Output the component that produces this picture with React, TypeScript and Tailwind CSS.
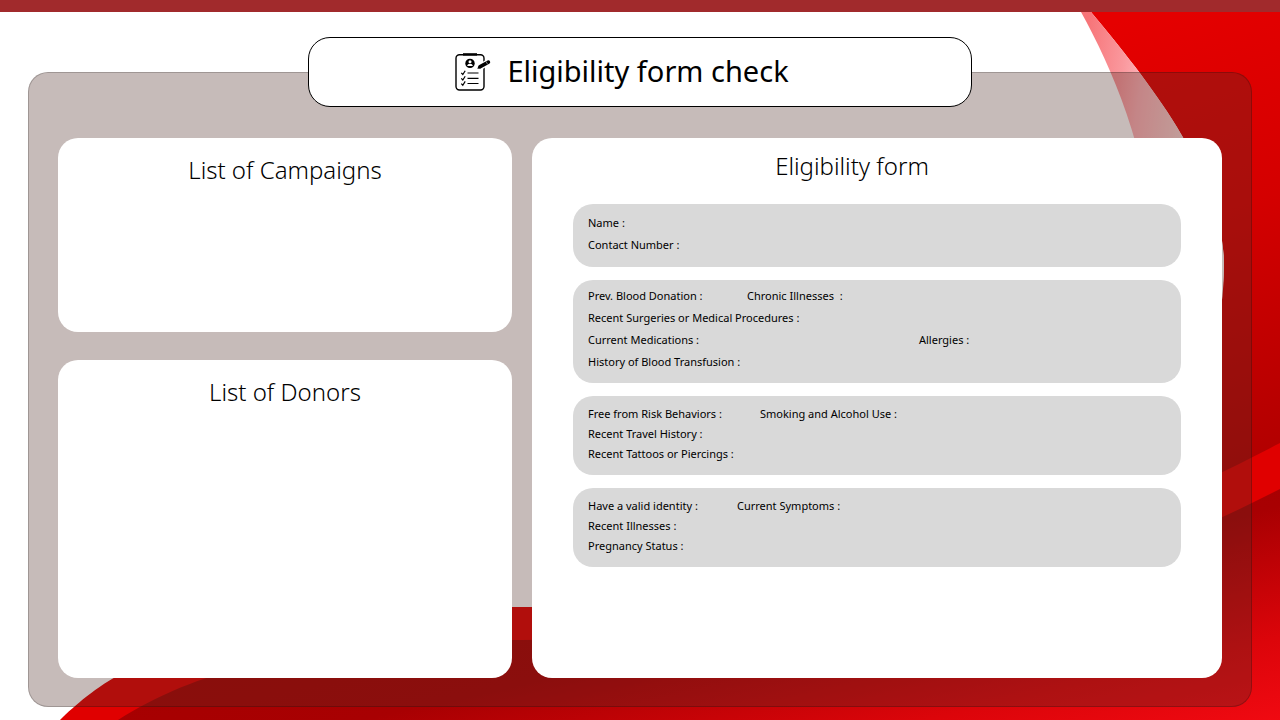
type Field = { id: string; label: string; width?: string };
type Group = { id: string; className: string; rows: Field[][] };

const groups: Group[] = [
  {
    id: "contact",
    className: "pt-2 pb-[11px] leading-[22px]",
    rows: [
      [{ id: "name", label: "Name :" }],
      [{ id: "contact-number", label: "Contact Number :" }],
    ],
  },
  {
    id: "medical",
    className: "pt-[5px] pb-[10px] leading-[22px]",
    rows: [
      [
        { id: "donation", label: "Prev. Blood Donation :", width: "w-[159px]" },
        { id: "chronic", label: "Chronic Illnesses  :" },
      ],
      [{ id: "surgeries", label: "Recent Surgeries or Medical Procedures :" }],
      [
        { id: "medications", label: "Current Medications :", width: "w-[331px]" },
        { id: "allergies", label: "Allergies :" },
      ],
      [{ id: "transfusion", label: "History of Blood Transfusion :" }],
    ],
  },
  {
    id: "lifestyle",
    className: "pt-2 pb-[11px] leading-[20px]",
    rows: [
      [
        { id: "risk", label: "Free from Risk Behaviors :", width: "w-[172px]" },
        { id: "smoking", label: "Smoking and Alcohol Use :" },
      ],
      [{ id: "travel", label: "Recent Travel History :" }],
      [{ id: "tattoos", label: "Recent Tattoos or Piercings :" }],
    ],
  },
  {
    id: "status",
    className: "pt-2 pb-[11px] leading-[20px]",
    rows: [
      [
        { id: "identity", label: "Have a valid identity :", width: "w-[149px]" },
        { id: "symptoms", label: "Current Symptoms :" },
      ],
      [{ id: "illnesses", label: "Recent Illnesses :" }],
      [{ id: "pregnancy", label: "Pregnancy Status :" }],
    ],
  },
];

function Backdrop() {
  return (
    <svg
      className="absolute inset-0 h-full w-full"
      viewBox="0 0 1280 720"
      preserveAspectRatio="none"
      aria-hidden="true"
    >
      <defs>
        <linearGradient id="upper" gradientUnits="userSpaceOnUse" x1="1120" y1="20" x2="1270" y2="470">
          <stop offset="0" stopColor="#e50000" />
          <stop offset="0.45" stopColor="#d40000" />
          <stop offset="1" stopColor="#b00000" />
        </linearGradient>
        <linearGradient id="lower" gradientUnits="userSpaceOnUse" x1="640" y1="560" x2="710" y2="860">
          <stop offset="0" stopColor="#a60000" />
          <stop offset="0.3" stopColor="#a80002" />
          <stop offset="0.72" stopColor="#dc050a" />
          <stop offset="1" stopColor="#f20a12" />
        </linearGradient>
        <linearGradient id="ribbon" gradientUnits="userSpaceOnUse" x1="1081" y1="70" x2="1224" y2="90">
          <stop offset="0" stopColor="#f77478" />
          <stop offset="0.28" stopColor="#fa989d" />
          <stop offset="0.42" stopColor="#fdb0b5" />
          <stop offset="0.75" stopColor="#f8d2d0" />
          <stop offset="1" stopColor="#ffffff" />
        </linearGradient>
      </defs>
      <path d="M1091 12C1150 83 1224 175 1224 265C1224 350 1190 430 1130 500L1280 480V12Z" fill="url(#upper)" />
      <path d="M1081 12C1113 70 1148 150 1158 265L1200 350C1216 325 1224 295 1224 265C1224 175 1150 83 1091 12Z" fill="url(#ribbon)" />
      <path d="M60 720C108 674 190 607 520 607C850 607 1050 564 1280 443V720Z" fill="#e00000" />
      <path d="M118 720C200 668 310 640 520 640C900 640 1100 582 1280 489V720Z" fill="url(#lower)" />
    </svg>
  );
}

function ChecklistIcon() {
  return (
    <svg className="h-[38px] w-9 shrink-0" viewBox="0 0 36 38" fill="none" stroke="#000" aria-hidden="true">
      <rect x="1" y="1.8" width="28" height="35.2" rx="3.5" strokeWidth="1.4" />
      <path d="M8 1.4H22" strokeWidth="2.4" />
      <circle cx="15" cy="10.4" r="4.7" fill="#000" stroke="none" />
      <circle cx="15" cy="8.7" r="1.5" fill="#fff" stroke="none" />
      <path d="M12.1 12.9Q12.4 10.8 15 10.8T17.9 12.9Z" fill="#fff" stroke="none" />
      <path d="M24 14.6L35 8.2" stroke="#fff" strokeWidth="6" />
      <path d="M25.2 13.6L33.4 9.2" strokeWidth="3.6" strokeLinecap="round" />
      <path d="M22.3 15.8L23.8 12.4L25.7 15.4Z" fill="#000" stroke="none" />
      <path d="M31 8.4L32.5 11.2" stroke="#fff" strokeWidth="0.5" />
      <path d="M6.3 19.9L7.8 21.5L10.2 17.7M6.3 25.4L7.8 27L10.2 23.2M6.3 30.6L7.8 32.2L10.2 28.4" strokeWidth="1.2" />
      <path d="M12.5 20H23.5M12.5 25.4H23.5M12.5 30.5H23.5" strokeWidth="1.1" />
    </svg>
  );
}

function FieldInput({ field }: { field: Field }) {
  return (
    <div className={`flex min-w-0 ${field.width ?? "flex-1"}`}>
      <label htmlFor={field.id} className="whitespace-pre">
        {field.label}
      </label>
      <input id={field.id} type="text" className="h-5 w-0 min-w-0 flex-1 bg-transparent pl-1 outline-none" />
    </div>
  );
}

export default function App() {
  return (
    <div className="relative isolate flex min-h-screen flex-col bg-white font-['Noto_Sans',sans-serif] text-black">
      <Backdrop />
      <div className="relative h-3 bg-[#a12a2c]" />
      <header className="relative z-10 mx-auto mt-[25px] -mb-[35px] flex h-[70px] w-[664px] max-w-[80%] items-center justify-center gap-4 rounded-[22px] border border-black bg-white pr-9">
        <ChecklistIcon />
        <h1 className="pb-[2px] text-[29px] leading-9 whitespace-nowrap">Eligibility form check</h1>
      </header>
      <main className="relative mx-7 mb-[13px] grid flex-1 grid-cols-[454fr_690fr] gap-5 rounded-[20px] border border-black/20 bg-[rgba(78,44,38,0.32)] px-[29px] pt-[65px] pb-7">
        <div className="grid grid-rows-[194fr_318fr] gap-7">
          <section className="rounded-[20px] bg-white pt-[14px] text-center">
            <h2 className="text-[24px] leading-9 font-light">List of Campaigns</h2>
          </section>
          <section className="rounded-[20px] bg-white pt-[14px] text-center">
            <h2 className="text-[24px] leading-9 font-light">List of Donors</h2>
          </section>
        </div>
        <form className="rounded-[20px] bg-white px-[41px] pt-[10px]">
          <h2 className="pr-[50px] text-center text-[24px] leading-9 font-light">Eligibility form</h2>
          <div className="mt-5 flex flex-col gap-[13px] text-[11px]">
            {groups.map((group) => (
              <div key={group.id} className={`rounded-[20px] bg-[#d9d9d9] px-[15px] ${group.className}`}>
                {group.rows.map((row) => (
                  <div key={row[0].id} className="flex">
                    {row.map((field) => (
                      <FieldInput key={field.id} field={field} />
                    ))}
                  </div>
                ))}
              </div>
            ))}
          </div>
        </form>
      </main>
    </div>
  );
}
